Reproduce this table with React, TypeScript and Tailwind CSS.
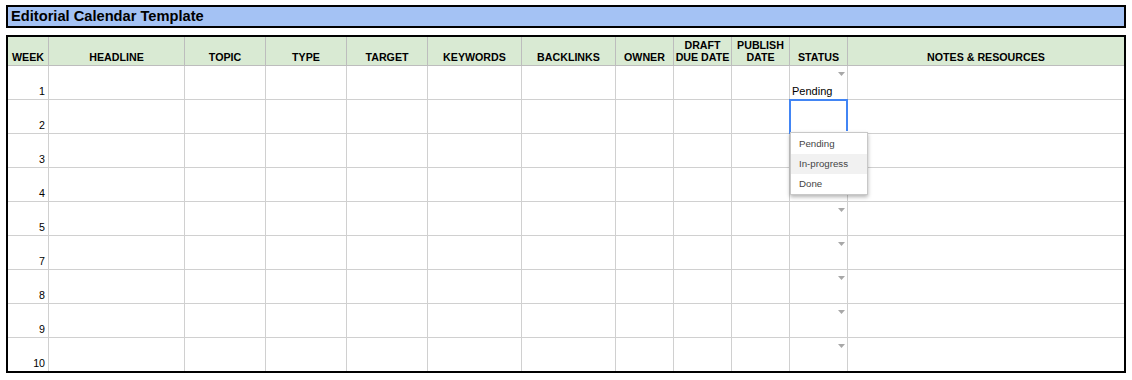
import React from "react";

const headers: { label: React.ReactNode; w: string }[] = [
  { label: "WEEK", w: "w-[41px]" },
  { label: "HEADLINE", w: "w-[136px]" },
  { label: "TOPIC", w: "w-[81px]" },
  { label: "TYPE", w: "w-[81px]" },
  { label: "TARGET", w: "w-[81px]" },
  { label: "KEYWORDS", w: "w-[94px]" },
  { label: "BACKLINKS", w: "w-[94px]" },
  { label: "OWNER", w: "w-[58px]" },
  { label: <>DRAFT<br />DUE DATE</>, w: "w-[58px]" },
  { label: <>PUBLISH<br />DATE</>, w: "w-[58px]" },
  { label: "STATUS", w: "w-[58px]" },
  { label: "NOTES & RESOURCES", w: "w-[276px]" },
];

const weeks = [1, 2, 3, 4, 5, 7, 8, 9, 10];

function Arrow() {
  return (
    <svg className="absolute top-[6px] right-[2px]" width="7" height="4" viewBox="0 0 7 4">
      <path d="M0 0 L7 0 L3.5 4 Z" fill="#a8a8a8" />
    </svg>
  );
}

export default function App() {
  return (
    <div
      className="bg-white w-[1132px] h-[380px] pt-[5px] pl-[6px]"
      style={{ fontFamily: '"Liberation Sans", Arial, sans-serif' }}
    >
      <div className="w-[1120px] h-[23px] border-2 border-black bg-[#a4c2f4] flex items-center pl-[3px]">
        <span className="text-[14.67px] font-bold text-black leading-none">Editorial Calendar Template</span>
      </div>
      <div className="mt-[7px] w-[1120px] border-2 border-black">
        <div className="flex h-[29px] bg-[#d9ead3]">
          {headers.map((h, i) => (
            <div
              key={i}
              className={`${h.w} shrink-0 h-full flex items-end justify-center pb-[2px] text-[10.67px] leading-[12px] font-bold text-black text-center border-b border-[#bdbdbd] ${
                i < headers.length - 1 ? "border-r" : ""
              }`}
            >
              <span>{h.label}</span>
            </div>
          ))}
        </div>
        {weeks.map((wk, r) => {
          const last = r === weeks.length - 1;
          return (
            <div key={wk} className={`flex ${last ? "h-[33px]" : "h-[34px]"}`}>
              {headers.map((h, i) => {
                const isStatus = i === 10;
                return (
                  <div
                    key={i}
                    className={`${h.w} shrink-0 h-full relative text-[10.67px] text-black border-[#d0d0d0] ${
                      last ? "" : "border-b"
                    } ${i < headers.length - 1 ? "border-r" : ""} ${
                      i === 0 ? "flex items-end justify-end pr-[3px] pb-[2px]" : ""
                    } ${isStatus ? "flex items-end pl-[2px] pb-[2px]" : ""} ${
                      isStatus && r === 1 ? "z-10" : ""
                    }`}
                  >
                    {i === 0 && <span className="leading-none">{wk}</span>}
                    {isStatus && r === 0 && (
                      <span className="text-[11px] leading-none">Pending</span>
                    )}
                    {isStatus && r !== 1 && <Arrow />}
                    {isStatus && r === 1 && (
                      <>
                        <div className="absolute left-[-1px] top-[-1px] w-[59px] h-[35px] border-2 border-[#4285f4]">
                          <div className="absolute right-[-4px] bottom-[-4px] w-[5px] h-[5px] bg-[#4285f4] border border-white" />
                        </div>
                        <div className="absolute left-0 top-[32px] w-[78px] bg-white border border-[#c8c8c8] shadow-[0_2px_4px_rgba(0,0,0,0.3)] pt-[1px] z-20">
                          <div className="h-[20px] flex items-center pl-[8px] text-[9.7px] text-[#444]">Pending</div>
                          <div className="h-[20px] flex items-center pl-[8px] text-[9.7px] text-[#444] bg-[#f1f1f1]">In-progress</div>
                          <div className="h-[20px] flex items-center pl-[8px] text-[9.7px] text-[#444]">Done</div>
                        </div>
                      </>
                    )}
                  </div>
                );
              })}
            </div>
          );
        })}
      </div>
    </div>
  );
}
